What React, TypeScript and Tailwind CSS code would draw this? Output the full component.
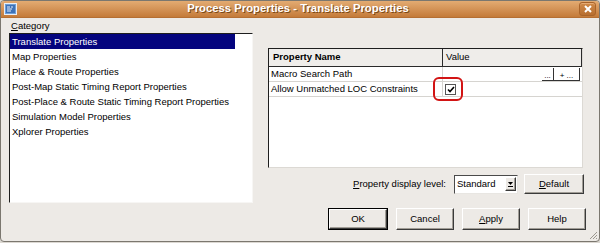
const categories = [
  'Translate Properties',
  'Map Properties',
  'Place & Route Properties',
  'Post-Map Static Timing Report Properties',
  'Post-Place & Route Static Timing Report Properties',
  'Simulation Model Properties',
  'Xplorer Properties',
];

const raised =
  'bg-[#edeae6] border border-t-white border-l-white border-r-[#3a3a3a] border-b-[#3a3a3a] shadow-[inset_-1px_-1px_0_#a19d96]';

const DialogButton = ({ children, w, isDefault }: { children: React.ReactNode; w: string; isDefault?: boolean }) => (
  <div className={`${w} h-[22px] ${isDefault ? 'border border-black' : ''}`}>
    <div className={`${raised} w-full h-full flex items-center justify-center text-[9.5px]`}>{children}</div>
  </div>
);

const AppIcon = () => (
  <svg width="13" height="12" viewBox="0 0 13 12">
    <rect x="0.5" y="0.5" width="12" height="11" fill="#6f9fd6" stroke="#e8eef7" />
    <rect x="2" y="2" width="9" height="8" fill="#3d72b8" />
    <path d="M3 4h3M3 6h5M7 4h2M3 8h4" stroke="#e6eefa" strokeWidth="1" />
  </svg>
);

export default function App() {
  return (
    <div
      className="w-[600px] h-[243px] bg-[#dcd8d2] text-black"
      style={{ fontFamily: '"Liberation Sans", Arial, sans-serif' }}
    >
      <div className="relative w-[600px] h-[242px] flex flex-col border border-[#7b776f] rounded-t-[4px] rounded-b-[4px] bg-[#edeae6] overflow-hidden">
        {/* title bar */}
        <div className="h-[17px] shrink-0 flex items-center bg-gradient-to-b from-[#e3ab72] to-[#c47b39] border-b border-[#b56f33] px-[3px]">
          <AppIcon />
          <div
            className="flex-1 text-center text-white font-bold text-[11.3px] leading-none"
            style={{ textShadow: '1px 1px 0 #7a4818' }}
          >
            Process Properties - Translate Properties
          </div>
          <div className="w-[17px] h-[14px] rounded-[3px] border border-[#a9642a] bg-gradient-to-b from-[#d08a48] to-[#b86f30] flex items-center justify-center shadow-[inset_0_1px_0_#e5aa72]">
            <svg width="8" height="8" viewBox="0 0 8 8">
              <path d="M1 1L7 7M7 1L1 7" stroke="white" strokeWidth="2" />
            </svg>
          </div>
        </div>

        {/* body */}
        <div className="flex-1 flex text-[9.5px]">
          {/* left column */}
          <div className="ml-[8px] w-[244px] flex flex-col">
            <div className="h-[13px] mt-[1px] leading-[13px] pl-[2px]">
              <span className="underline">C</span>ategory
            </div>
            <div className="mt-[1px] h-[170px] bg-white border-t border-l border-t-[#1e1e1e] border-l-[#1e1e1e] border-r border-b border-r-[#f7f6f4] border-b-[#f7f6f4]">
              {categories.map((c, i) => (
                <div
                  key={c}
                  className={`h-[15px] leading-[15px] pl-[2px] w-[225px] whitespace-nowrap ${
                    i === 0 ? 'bg-[#04047e] text-white' : ''
                  }`}
                >
                  {c}
                </div>
              ))}
            </div>
          </div>

          {/* right column */}
          <div className="ml-[15px] w-[316px] flex flex-col pt-[30px]">
            <div className="relative w-[315px] h-[120px] bg-white border-t border-l border-t-[#1e1e1e] border-l-[#1e1e1e] border-r border-b border-r-[#dcd9d4] border-b-[#dcd9d4]">
              <div className="flex h-[18px] bg-[#efedea] border-b border-[#2a2a2a] border-r border-r-[#2a2a2a]">
                <div className="w-[174px] border-r border-[#2a2a2a] pl-[4px] font-bold flex items-center">Property Name</div>
                <div className="flex-1 pl-[3px] flex items-center">Value</div>
              </div>
              <div className="flex h-[15px] border-b border-[#d6d4d0]">
                <div className="w-[174px] border-r border-[#d6d4d0] pl-[2px] flex items-center">Macro Search Path</div>
                <div className="flex-1 flex items-end justify-end pr-[2px]">
                  <div className="w-[12px] h-[13px] flex items-end justify-center text-[8px] leading-[9px] border-r border-b border-[#333]">...</div>
                  <div className="w-[26px] h-[13px] flex items-end justify-center text-[8px] leading-[9px] border-r border-b border-[#333]">+ ...</div>
                </div>
              </div>
              <div className="flex h-[15px] border-b border-[#d6d4d0]">
                <div className="w-[174px] border-r border-[#d6d4d0] pl-[2px] flex items-center">Allow Unmatched LOC Constraints</div>
                <div className="flex-1 flex items-center pl-[2px]">
                  <div className="w-[11px] h-[11px] border border-[#555] bg-white flex items-center justify-center">
                    <svg width="8" height="7" viewBox="0 0 8 7">
                      <path d="M1 3.5L3 5.5L7 1" stroke="black" strokeWidth="1.6" fill="none" />
                    </svg>
                  </div>
                </div>
              </div>
              {/* red highlight drawn over the checkbox */}
              <div className="absolute left-[164px] top-[28px] w-[30px] h-[24px] border-2 border-[#d21414] rounded-[6px]" />
            </div>

            <div className="mt-[6px] h-[20px] flex items-center justify-end">
              <div className="mr-[8px]">
                <span className="underline">P</span>roperty display level:
              </div>
              <div className="w-[64px] h-[19px] bg-white border border-t-[#4a4a4a] border-l-[#4a4a4a] border-r-[#e8e6e2] border-b-[#e8e6e2] flex items-center pl-[2px]">
                <span className="flex-1">Standard</span>
                <div className={`${raised} w-[11px] h-[14px] mr-[1px] flex flex-col items-center justify-center gap-[1px]`}>
                  <svg width="5" height="3" viewBox="0 0 5 3">
                    <path d="M0 0H5L2.5 3Z" fill="black" />
                  </svg>
                  <div className="w-[5px] h-[1px] bg-black" />
                </div>
              </div>
              <div className="ml-[6px]">
                <div className={`${raised} w-[60px] h-[20px] flex items-center justify-center`}>
                  <span className="underline">D</span>efault
                </div>
              </div>
            </div>

            <div className="mt-[14px] flex justify-end gap-[8px] mr-[-2px]">
              <DialogButton w="w-[60px]" isDefault>OK</DialogButton>
              <DialogButton w="w-[58px]">Cancel</DialogButton>
              <DialogButton w="w-[58px]">
                <span className="underline">A</span>pply
              </DialogButton>
              <DialogButton w="w-[58px]">Help</DialogButton>
            </div>
          </div>
        </div>

        {/* resize grip */}
        <svg className="absolute right-[1px] bottom-[1px]" width="9" height="9" viewBox="0 0 9 9">
          <path d="M8 1L1 8M8 4L4 8M8 7L7 8" stroke="#9b978f" strokeWidth="1" />
        </svg>
      </div>
    </div>
  );
}
